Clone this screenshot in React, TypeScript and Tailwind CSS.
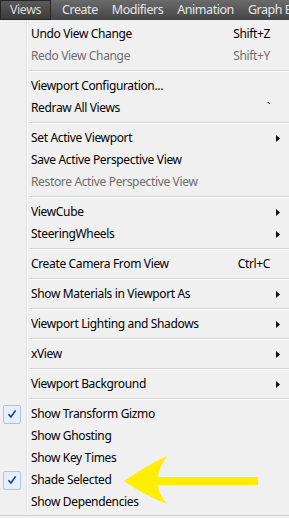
import React from "react";

type Item =
  | { kind: "sep" }
  | { kind: "item"; label: string; shortcut?: string; sub?: boolean; disabled?: boolean; checked?: boolean };

const items: Item[] = [
  { kind: "item", label: "Undo View Change", shortcut: "Shift+Z" },
  { kind: "item", label: "Redo View Change", shortcut: "Shift+Y", disabled: true },
  { kind: "sep" },
  { kind: "item", label: "Viewport Configuration..." },
  { kind: "item", label: "Redraw All Views", shortcut: "`" },
  { kind: "sep" },
  { kind: "item", label: "Set Active Viewport", sub: true },
  { kind: "item", label: "Save Active Perspective View" },
  { kind: "item", label: "Restore Active Perspective View", disabled: true },
  { kind: "sep" },
  { kind: "item", label: "ViewCube", sub: true },
  { kind: "item", label: "SteeringWheels", sub: true },
  { kind: "sep" },
  { kind: "item", label: "Create Camera From View", shortcut: "Ctrl+C" },
  { kind: "sep" },
  { kind: "item", label: "Show Materials in Viewport As", sub: true },
  { kind: "sep" },
  { kind: "item", label: "Viewport Lighting and Shadows", sub: true },
  { kind: "sep" },
  { kind: "item", label: "xView", sub: true },
  { kind: "sep" },
  { kind: "item", label: "Viewport Background", sub: true },
  { kind: "sep" },
  { kind: "item", label: "Show Transform Gizmo", checked: true },
  { kind: "item", label: "Show Ghosting" },
  { kind: "item", label: "Show Key Times" },
  { kind: "item", label: "Shade Selected", checked: true },
  { kind: "item", label: "Show Dependencies" },
];

const topMenus = ["Create", "Modifiers", "Animation"];

function Check() {
  return (
    <div className="w-[18px] h-[19px] ml-[3px] rounded-[2px] border border-[#a9c6e6] bg-[#e6eef8] flex items-center justify-center">
      <svg width="10" height="10" viewBox="0 0 10 10">
        <path d="M1.5 5.2 L4 8 L8.6 1.4" fill="none" stroke="#1b3a9a" strokeWidth="1.6" />
      </svg>
    </div>
  );
}

function Gutter() {
  return <div className="w-px self-stretch bg-[#e2e3e3] border-r border-white box-content shrink-0" />;
}

function Row({ it }: { it: Extract<Item, { kind: "item" }> }) {
  return (
    <div className="flex items-center h-[22px]">
      <div className="w-[26px] shrink-0 flex items-center">{it.checked && <Check />}</div>
      <Gutter />
      <div className={`flex-1 flex items-center pl-[3px] pr-[9px] ${it.disabled ? "text-[#6d6d6d]" : "text-black"}`}>
        <span className="flex-1">{it.label}</span>
        {it.shortcut && <span className="mr-[10px]">{it.shortcut}</span>}
        {it.sub && (
          <svg width="4" height="7" viewBox="0 0 4 7">
            <path d="M0 0 L4 3.5 L0 7 Z" fill="#111" />
          </svg>
        )}
      </div>
    </div>
  );
}

function Sep() {
  return (
    <div className="flex h-[8px]">
      <div className="w-[26px] shrink-0" />
      <Gutter />
      <div className="flex-1 flex flex-col justify-center pl-[1px]">
        <div className="h-px bg-[#d7d7d7]" />
        <div className="h-px bg-white" />
      </div>
    </div>
  );
}

export default function App() {
  return (
    <div
      className="w-[289px] h-[518px] overflow-hidden bg-[#f0f0f0] text-[12px] tracking-[-0.35px] relative"
      style={{ fontFamily: '"Noto Sans", "Open Sans", sans-serif' }}
    >
      <div className="h-[20px] flex items-stretch overflow-hidden bg-gradient-to-b from-[#6b6b6b] to-[#454545] text-[#e6e6e6] text-[12.5px] tracking-[-0.45px] whitespace-nowrap">
        <div className="w-[51px] shrink-0 flex items-center justify-center border border-[#262626] bg-gradient-to-b from-[#5a5a5a] to-[#3c3c3c] text-[#dcdcdc]">
          Views
        </div>
        <div className="flex items-center gap-[14px] pl-[11px]">
          {topMenus.map(m => <span key={m}>{m}</span>)}
          <span>Graph E</span>
        </div>
      </div>
      <div className="flex h-[3px]">
        <div className="w-[26px]" />
        <Gutter />
      </div>
      {items.map((it, i) => (it.kind === "sep" ? <Sep key={i} /> : <Row key={i} it={it} />))}
      <div className="h-px bg-[#d0d0d0] mt-[2px]" />

      <svg className="absolute left-[122px] top-[455px]" width="140" height="50" viewBox="0 0 140 50">
        <path
          d="M2 26 Q22 12 45 1 Q36 14 36 22 L136 22 L136 30 L36 30 Q36 38 45 49 Q22 40 2 26 Z"
          fill="#ffee00"
        />
      </svg>
    </div>
  );
}
